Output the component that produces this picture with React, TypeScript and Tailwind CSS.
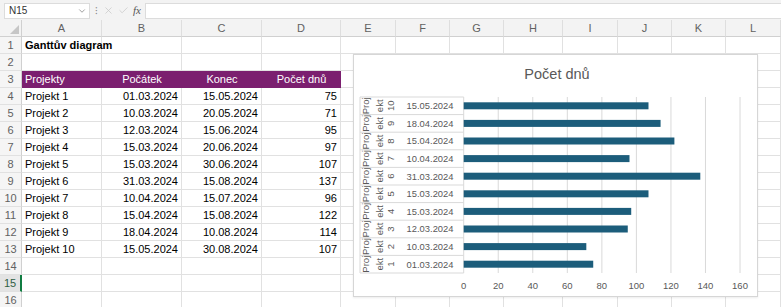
import React from 'react';
import { ChevronDown, X, Check } from 'lucide-react';

const letters = ['A', 'B', 'C', 'D', 'E', 'F', 'G', 'H', 'I', 'J', 'K', 'L'];

const projects = [
  { name: 'Projekt 1', start: '01.03.2024', end: '15.05.2024', days: 75 },
  { name: 'Projekt 2', start: '10.03.2024', end: '20.05.2024', days: 71 },
  { name: 'Projekt 3', start: '12.03.2024', end: '15.06.2024', days: 95 },
  { name: 'Projekt 4', start: '15.03.2024', end: '20.06.2024', days: 97 },
  { name: 'Projekt 5', start: '15.03.2024', end: '30.06.2024', days: 107 },
  { name: 'Projekt 6', start: '31.03.2024', end: '15.08.2024', days: 137 },
  { name: 'Projekt 7', start: '10.04.2024', end: '15.07.2024', days: 96 },
  { name: 'Projekt 8', start: '15.04.2024', end: '15.08.2024', days: 122 },
  { name: 'Projekt 9', start: '18.04.2024', end: '10.08.2024', days: 114 },
  { name: 'Projekt 10', start: '15.05.2024', end: '30.08.2024', days: 107 },
];

type Cell = { text?: string; align?: 'left' | 'right' | 'center'; bold?: boolean; head?: boolean };

function buildRows(): Cell[][] {
  const rows: Cell[][] = [];
  rows.push([{ text: 'Ganttův diagram', bold: true }]);
  rows.push([]);
  rows.push([
    { text: 'Projekty', head: true },
    { text: 'Počátek', head: true, align: 'center' },
    { text: 'Konec', head: true, align: 'center' },
    { text: 'Počet dnů', head: true, align: 'center' },
  ]);
  projects.forEach((p) =>
    rows.push([
      { text: p.name },
      { text: p.start, align: 'right' },
      { text: p.end, align: 'right' },
      { text: String(p.days), align: 'right' },
    ])
  );
  rows.push([], [], []);
  return rows;
}

function FormulaBar() {
  return (
    <div className="flex h-[20px] items-center bg-[#f3f3f3] pt-[1px]">
      <div className="ml-[4px] flex h-[16px] w-[86px] items-center justify-between border border-[#dcdcdc] bg-white pl-[4px] pr-[2px]">
        <span className="text-[10px] text-[#333]">N15</span>
        <ChevronDown className="h-[10px] w-[10px] text-[#666]" strokeWidth={1.5} />
      </div>
      <span className="ml-[5px] text-[10px] leading-none text-[#888]">⁝</span>
      <div className="ml-[5px] flex items-center gap-[4px] text-[#c4c4c4]">
        <X className="h-[11px] w-[11px]" strokeWidth={1.5} />
        <Check className="h-[11px] w-[11px]" strokeWidth={1.5} />
        <span className="font-['Liberation_Serif',serif] text-[11px] italic text-[#555]">fx</span>
      </div>
      <div className="ml-[4px] h-[16px] flex-1 border-y border-l border-[#dcdcdc] bg-white" />
    </div>
  );
}

function Chart() {
  const top = 42;
  const rowH = 17.6;
  const x0 = 109.7;
  const unit = 1.727;
  const ordered = [...projects].reverse();
  const ticks = [0, 20, 40, 60, 80, 100, 120, 140, 160];
  return (
    <div className="absolute left-[353px] top-[54px] h-[243px] w-[405px] border border-[#d6d6d6] bg-white shadow-[0_1px_2px_rgba(0,0,0,0.08)]">
      <svg width="405" height="243" className="font-['Liberation_Sans',Arial,sans-serif]">
        <text x="203" y="24" textAnchor="middle" fontSize="14.5" fill="#595959">
          Počet dnů
        </text>
        {ticks.map((t) => (
          <line key={t} x1={x0 + t * unit} x2={x0 + t * unit} y1={top} y2={top + rowH * 10} stroke="#d9d9d9" strokeWidth="1" />
        ))}
        {Array.from({ length: 11 }).map((_, i) => (
          <line key={i} x1="6" x2={x0} y1={top + i * rowH} y2={top + i * rowH} stroke="#d9d9d9" strokeWidth="1" />
        ))}
        <line x1="6" x2="6" y1={top} y2={top + rowH * 10} stroke="#d9d9d9" strokeWidth="1" />
        {ordered.map((p, k) => {
          const cy = top + k * rowH + rowH / 2;
          const num = p.name.replace('Projekt ', '');
          return (
            <g key={p.name}>
              <text transform={`translate(15 ${cy}) rotate(-90)`} textAnchor="middle" fontSize="9.5" fill="#595959">
                Proj
              </text>
              <text transform={`translate(28.5 ${cy}) rotate(-90)`} textAnchor="middle" fontSize="9.5" fill="#595959">
                ekt
              </text>
              <text transform={`translate(40 ${cy}) rotate(-90)`} textAnchor="middle" fontSize="9.5" fill="#595959">
                {num}
              </text>
              <text x="99.5" y={cy + 3.4} textAnchor="end" fontSize="9.4" fill="#595959">
                {p.start}
              </text>
              <rect x={x0} y={cy - 3.5} width={p.days * unit} height="7" fill="#1c5d7b" />
            </g>
          );
        })}
        {ticks.map((t) => (
          <text key={t} x={x0 + t * unit} y="234" textAnchor="middle" fontSize="9.5" fill="#595959">
            {t}
          </text>
        ))}
      </svg>
    </div>
  );
}

export default function App() {
  const rows = buildRows();
  return (
    <div className="relative h-[307px] w-[781px] overflow-hidden bg-white font-['Liberation_Sans',Arial,sans-serif]">
      <FormulaBar />
      <div className="grid grid-cols-[22px_80px_80px_80px_79px_55px_54px_54px_59px_55px_54px_54px_1fr] auto-rows-[17px]">
        {/* column headers */}
        <div className="relative border-b border-r border-[#d0d0d0] bg-[#f3f3f3]">
          <div className="absolute bottom-[2px] right-[2px] h-0 w-0 border-b-[9px] border-l-[9px] border-b-[#c6c6c6] border-l-transparent" />
        </div>
        {letters.map((l) => (
          <div key={l} className="flex items-center justify-center border-b border-r border-b-[#d0d0d0] border-r-[#dedede] bg-[#f3f3f3] text-[11px] text-[#616161]">
            {l}
          </div>
        ))}
        {rows.map((row, r) => {
          const sel = r === 14;
          return (
            <React.Fragment key={r}>
              <div
                className={`flex items-center justify-center border-b border-r border-b-[#e1e1e1] text-[11px] ${
                  sel ? 'border-r-2 border-r-[#107c41] bg-[#e3e3e3] text-[#2f5f45]' : 'border-r-[#d0d0d0] bg-[#f5f5f5] text-[#616161]'
                }`}
              >
                {r + 1}
              </div>
              {letters.map((l, c) => {
                const cell = row[c];
                const head = cell?.head || (r === 2 && c < 4);
                const align = cell?.align === 'right' ? 'justify-end' : cell?.align === 'center' ? 'justify-center' : 'justify-start';
                return (
                  <div
                    key={l}
                    className={`flex items-center overflow-visible whitespace-nowrap px-[3px] text-[11px] ${align} ${
                      head ? 'bg-[#7b1f6f] text-white' : 'border-b border-r border-[#e1e1e1] text-black'
                    } ${cell?.bold ? 'font-bold' : ''}`}
                  >
                    {cell?.text}
                  </div>
                );
              })}
            </React.Fragment>
          );
        })}
      </div>
      <Chart />
    </div>
  );
}
